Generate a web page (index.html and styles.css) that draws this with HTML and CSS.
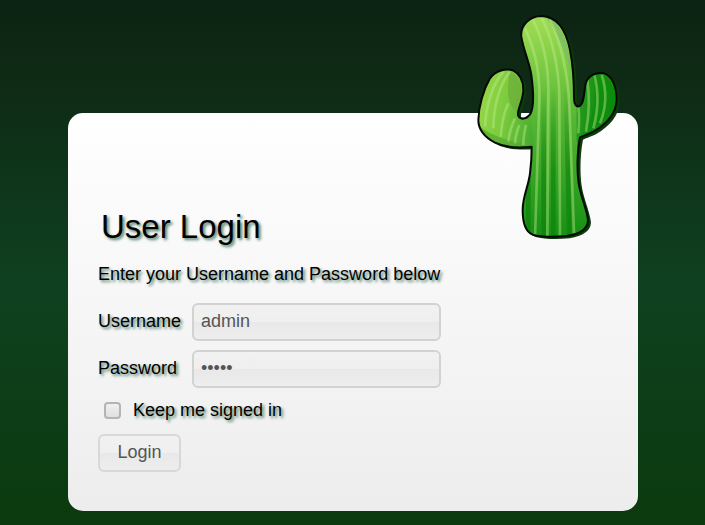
FILE: index.html
```html
<!DOCTYPE html>
<html lang="en">
<head>
<meta charset="utf-8">
<title>Login to Cacti</title>
<link rel="stylesheet" href="styles.css">
</head>
<body>
<svg class="logo" viewBox="0 0 540 750" aria-hidden="true">
  <defs>
    <path id="cactus" d="M245 48C290 50 318 90 330 150C340 200 342 250 342 295C342 315 350 322 358 318C372 312 372 280 376 255C382 225 410 216 432 220C458 228 470 262 470 300C468 340 440 372 400 395C385 403 368 408 360 412C352 450 350 510 356 550C362 590 380 625 384 660C384 685 360 702 320 708C280 712 240 710 218 704C195 695 188 665 188 630C188 590 205 560 210 520C214 490 215 460 215 440C180 444 135 442 105 428C75 412 55 390 55 360C56 320 70 270 90 235C105 212 140 203 160 212C180 222 190 245 190 270C190 300 172 325 174 345C180 362 200 358 212 340C222 320 220 270 214 225C208 185 190 150 184 110C180 75 210 48 245 48Z"/>
    <clipPath id="cactus-clip"><use href="#cactus"/></clipPath>
    <linearGradient id="cactus-fill" x1="0" y1="0" x2="1" y2="0.35">
      <stop offset="0" stop-color="#a8e050"/>
      <stop offset="0.3" stop-color="#7ccb3e"/>
      <stop offset="0.55" stop-color="#3ea82c"/>
      <stop offset="1" stop-color="#0a8a0a"/>
    </linearGradient>
    <linearGradient id="stem-top" x1="0" y1="0" x2="0" y2="1">
      <stop offset="0" stop-color="#a6e055"/>
      <stop offset="0.45" stop-color="#58b835"/>
      <stop offset="1" stop-color="#128f12"/>
    </linearGradient>
    <linearGradient id="band-fade" gradientUnits="userSpaceOnUse" x1="0" y1="260" x2="0" y2="520">
      <stop offset="0" stop-color="#0a7f0a" stop-opacity="0"/>
      <stop offset="1" stop-color="#0a7f0a" stop-opacity=".6"/>
    </linearGradient>
  </defs>
  <use href="#cactus" class="logo-shadow" transform="translate(9 7)"/>
  <use href="#cactus" fill="url(#cactus-fill)"/>
  <g clip-path="url(#cactus-clip)">
    <path fill="url(#stem-top)" d="M170 30H350V420L390 730H170L220 420Z"/>
    <path fill="#6faf3a" opacity=".75" d="M150 212C175 225 190 260 185 300L172 335C150 320 135 290 150 212Z"/>
    <path fill="#58ad30" opacity=".8" d="M60 380C80 395 120 420 200 432L215 445H90Z"/>
    <path fill="#0c8c0c" opacity=".6" d="M395 218C430 215 475 260 470 310C460 350 420 390 362 410C400 360 415 290 395 218Z"/>
    <path fill="#7ab86a" opacity=".7" d="M262 48C300 70 325 120 332 190L340 240C325 190 305 110 255 50Z"/>
    <g class="logo-bands">
      <path d="M244 260H258V715H244Z"/>
      <path d="M273 260H287V715H273Z"/>
      <path d="M311 260H325L335 715H321Z"/>
      <path d="M198 440H212V700H198Z"/>
    </g>
    <g class="logo-stripes">
      <path d="M195 85C220 140 240 200 238 300L225 715"/>
      <path d="M218 58C250 120 268 200 265 300L262 715"/>
      <path d="M243 50C275 110 298 200 298 300L300 715"/>
      <path d="M270 60C300 120 325 220 328 320L342 700"/>
      <path d="M100 385C100 320 120 250 150 215"/>
      <path d="M75 380C78 310 100 250 130 215"/>
      <path d="M122 410C125 370 130 340 145 310"/>
      <path d="M145 425C148 395 155 375 165 355"/>
      <path d="M165 430C166 410 170 395 178 375"/>
      <path d="M190 435C190 415 192 400 198 375"/>
      <path d="M355 400C358 370 358 345 355 320"/>
      <path d="M378 395C388 340 388 280 382 240"/>
      <path d="M400 385C415 330 415 270 403 225"/>
      <path d="M420 370C440 320 440 270 425 225"/>
    </g>
  </g>
  <use href="#cactus" class="logo-outline"/>
</svg>
<main class="card">
  <h1 class="title">User Login</h1>
  <p class="intro">Enter your Username and Password below</p>
  <form class="form">
    <div class="row">
      <label class="label" for="user">Username</label>
      <input class="field" id="user" type="text" value="admin">
    </div>
    <div class="row">
      <label class="label" for="pass">Password</label>
      <input class="field" id="pass" type="password" value="admin">
    </div>
    <div class="keep">
      <span class="check"></span>
      <span class="keep-text">Keep me signed in</span>
    </div>
    <button class="button" type="button">Login</button>
  </form>
</main>
</body>
</html>
```
FILE: styles.css
```css
* { box-sizing: border-box; }
html, body { height: 100%; }
body {
  margin: 0;
  height: 525px;
  overflow: hidden;
  padding: 113px 0 0 68px;
  background: linear-gradient(to bottom, #0c2413 0%, #0e2a15 15%, #0f4120 55%, #0b3a0e 100%);
  font-family: "Liberation Sans", Arial, sans-serif;
  color: #000;
}
.logo {
  position: absolute;
  left: 460px;
  top: 0;
  width: 180px;
  height: 250px;
  z-index: 2;
}
.logo-shadow { fill: #0b3d0b; }
.logo-outline { fill: none; stroke: #060a06; stroke-width: 6; stroke-linejoin: round; }
.logo-stripes path { fill: none; stroke: #c4ec90; stroke-width: 8; opacity: .42; }
.logo-bands path { fill: url(#band-fade); }
.card {
  width: 570px;
  height: 398px;
  border-radius: 15px;
  background: linear-gradient(to bottom, #ffffff 0%, #ededed 100%);
  padding: 95px 30px 0;
}
.title {
  margin: 0 0 0 3px;
  font-size: 33px;
  line-height: 38px;
  font-weight: 400;
  text-shadow: 2px 2px 3px #4f7d68;
}
.intro {
  margin: 18px 0 0;
  font-size: 18px;
  line-height: 21px;
  text-shadow: 2px 2px 3px #4f7d68;
}
.form { display: flex; flex-direction: column; align-items: flex-start; margin-top: 18px; }
.row { display: flex; align-items: center; height: 38px; margin-bottom: 9px; }
.label {
  width: 94px;
  padding-bottom: 2px;
  font-size: 18px;
  text-shadow: 2px 2px 3px #4f7d68;
}
.field {
  width: 249px;
  height: 38px;
  padding: 0 7px 2px;
  border: 2px solid #d2d2d2;
  border-radius: 6px;
  background: linear-gradient(to bottom, #f1f1f1 0%, #efefef 50%, #e8e8e8 51%, #eeeeee 100%);
  color: #555;
  font: 18px "Liberation Sans", Arial, sans-serif;
  outline: none;
}
.keep { display: flex; align-items: center; margin: 0 0 11px 6px; height: 26px; }
.check {
  width: 17px;
  height: 17px;
  border: 2px solid #b4b4b4;
  border-radius: 4px;
  background: linear-gradient(to bottom, #f0f0f0, #e0e0e0);
}
.keep-text {
  margin-left: 12px;
  font-size: 18px;
  text-shadow: 2px 2px 3px #4f7d68;
}
.button {
  width: 83px;
  height: 38px;
  padding: 0 0 2px;
  border: 2px solid #d8d8d8;
  border-radius: 6px;
  background: linear-gradient(to bottom, #f1f1f1 0%, #efefef 50%, #e8e8e8 51%, #eeeeee 100%);
  color: #555;
  font: 18px "Liberation Sans", Arial, sans-serif;
}
```
